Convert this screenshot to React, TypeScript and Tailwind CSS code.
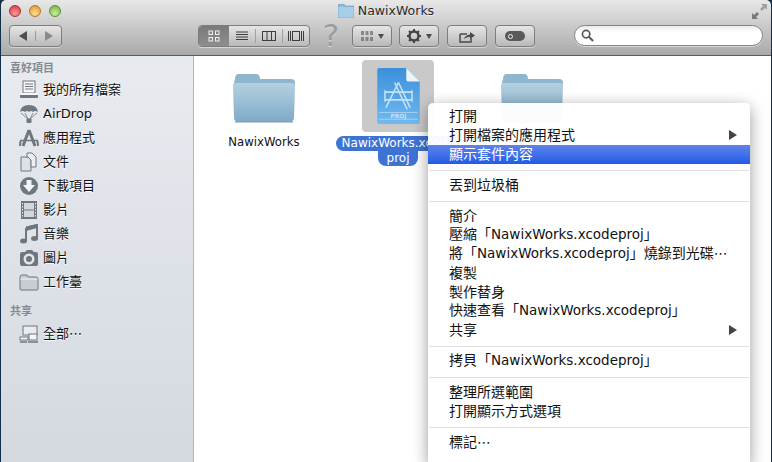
import type { ReactNode } from "react";

const FONT = "font-['DejaVu_Sans','Noto_Sans_CJK_TC',sans-serif]";

function FolderIcon({ className, gradId }: { className: string; gradId: string }) {
  return (
    <svg viewBox="0 0 64 50" className={className}>
      <defs>
        <linearGradient id={gradId} x1="0" y1="0" x2="0" y2="1">
          <stop offset="0" stopColor="#b5d0e1" />
          <stop offset="1" stopColor="#7fabc8" />
        </linearGradient>
      </defs>
      <path d="M3 6 Q3 1 7 1 L24 1 Q28 1 28 6 L59 6 Q63 6 63 10 L63 14 L1 14 Z" fill="#8fb5cf" />
      <path d="M1 13 Q1 10 4 10 L60 10 Q63 10 63 13 L62 45 Q62 48 59 48 L5 48 Q2 48 2 45 Z" fill={`url(#${gradId})`} />
      <rect x="3" y="48" width="58" height="1.5" fill="#5c7587" opacity="0.7" />
    </svg>
  );
}

function ProjectIcon() {
  return (
    <svg viewBox="0 0 46 60" className="h-[58px] w-[45px]">
      <defs>
        <linearGradient id="proj" x1="0" y1="0" x2="0" y2="1">
          <stop offset="0" stopColor="#3c8fdb" />
          <stop offset="1" stopColor="#70baf0" />
        </linearGradient>
      </defs>
      <path d="M1 3 Q1 1 3 1 L31 1 L45 15 L45 57 Q45 59 43 59 L3 59 Q1 59 1 57 Z" fill="url(#proj)" />
      <path d="M31 1 L45 15 L33 15 Q31 15 31 13 Z" fill="#eef3f7" />
      <g fill="none" stroke="#c2e2f8" strokeWidth="1.6">
        <path d="M23 16 L10 42 M23 16 L35 42 M19 16 L32 44" />
        <path d="M9 26 H37 M9 34 H37 M9 24 V36 M37 24 V36" />
        <path d="M3 47 H43 M3 54 H43" strokeWidth="0.7" />
      </g>
      <text x="23" y="53" textAnchor="middle" fontSize="6" fontWeight="700" fill="#c2e2f8" fontFamily="DejaVu Sans">
        PROJ
      </text>
    </svg>
  );
}

function SidebarGlyph({ name }: { name: string }) {
  const c = "#70767e";
  const box = "h-[20px] w-[20px]";
  switch (name) {
    case "all":
      return (
        <svg viewBox="0 0 20 20" className={box}>
          <rect x="4" y="1" width="12" height="12" fill="#f5f6f8" stroke={c} />
          <path d="M6 4H14M6 6.5H14M6 9H14" stroke={c} />
          <rect x="1" y="13" width="18" height="5" rx="1" fill={c} />
          <rect x="1" y="13" width="18" height="2" fill="#f5f6f8" />
        </svg>
      );
    case "airdrop":
      return (
        <svg viewBox="0 0 20 20" className={box}>
          <path d="M1 8 Q2 1 10 1 Q18 1 19 8 Q16 6 14 8 Q12 6 10 8 Q8 6 6 8 Q4 6 1 8Z" fill={c} />
          <path d="M2 9 L9 15 M18 9 L11 15 M6 9 L9 15 M14 9 L11 15" stroke={c} strokeWidth="0.8" />
          <rect x="7.5" y="14.5" width="5" height="4.5" rx="1" fill={c} />
        </svg>
      );
    case "apps":
      return (
        <svg viewBox="0 0 20 20" className={box}>
          <path d="M10 2 L4 18 M10 2 L16 18" stroke={c} strokeWidth="3" fill="none" />
          <path d="M1 12.5 H19" stroke={c} strokeWidth="1.5" />
          <path d="M1.5 13 L1 18 M18.5 13 L19 18" stroke={c} strokeWidth="2" />
        </svg>
      );
    case "docs":
      return (
        <svg viewBox="0 0 20 20" className={box}>
          <path d="M2 5 H9 L12 8 V19 H2 Z" fill="#dde0e5" stroke={c} />
          <path d="M8 1 H13 L17 5 V15 H12 V8 L9 5 H8 Z" fill="#eceef1" stroke={c} />
        </svg>
      );
    case "downloads":
      return (
        <svg viewBox="0 0 20 20" className={box}>
          <circle cx="10" cy="10" r="9" fill={c} />
          <path d="M7.5 4 H12.5 V9 H16 L10 16 L4 9 H7.5 Z" fill="#f3f4f6" />
        </svg>
      );
    case "movies":
      return (
        <svg viewBox="0 0 20 20" className={box}>
          <rect x="2" y="1" width="16" height="18" fill={c} />
          <rect x="5" y="3" width="10" height="6.5" fill="#d3d6db" />
          <rect x="5" y="10.5" width="10" height="6.5" fill="#d3d6db" />
          <path d="M3.5 3V17M16.5 3V17" stroke="#e6e8eb" strokeDasharray="1.5 1.5" />
        </svg>
      );
    case "music":
      return (
        <svg viewBox="0 0 20 20" className={box}>
          <path d="M7 4 L18 1 V14 M7 4 V17" stroke={c} strokeWidth="2" fill="none" />
          <path d="M7 2.5 L18 0 V4 L7 7 Z" fill={c} />
          <ellipse cx="4.5" cy="17" rx="3.5" ry="2.5" fill={c} />
          <ellipse cx="15.5" cy="14.5" rx="3.5" ry="2.5" fill={c} />
        </svg>
      );
    case "photos":
      return (
        <svg viewBox="0 0 20 20" className={box}>
          <path d="M1 6 Q1 4 3 4 L6 4 L8 2 H13 L15 4 H17 Q19 4 19 6 V16 Q19 18 17 18 H3 Q1 18 1 16 Z" fill={c} />
          <circle cx="10" cy="11" r="5.5" fill="#e4e6ea" />
          <circle cx="10" cy="11" r="3" fill={c} />
        </svg>
      );
    case "desk":
      return (
        <svg viewBox="0 0 20 20" className={box}>
          <path d="M1 5 Q1 3 3 3 H8 L9 5 H17 Q19 5 19 7 V17 Q19 18 18 18 H2 Q1 18 1 17 Z" fill="#c9cdd3" stroke={c} />
          <path d="M1.5 7 H18.5" stroke="#f2f3f5" />
        </svg>
      );
    default:
      return (
        <svg viewBox="0 0 20 20" className={box}>
          <rect x="4" y="2" width="14" height="9" fill="#e9ebee" stroke={c} />
          <rect x="1" y="13" width="8" height="3" fill="#f4f5f7" stroke={c} />
          <rect x="10" y="10" width="8" height="6" fill="#f4f5f7" stroke={c} />
          <path d="M9 18 H19" stroke={c} strokeWidth="1.5" />
          <path d="M1 18 H8" stroke={c} strokeWidth="1.5" />
        </svg>
      );
  }
}

function SidebarItem({ icon, label }: { icon: string; label: string }) {
  return (
    <div className="flex h-[24px] items-center pl-[18px]">
      <SidebarGlyph name={icon} />
      <span className="mb-px ml-[4px] text-[13px] text-[#111] [text-shadow:0_1px_0_#fff]">{label}</span>
    </div>
  );
}

function ToolButton({ className, children }: { className: string; children: ReactNode }) {
  return (
    <div
      className={`flex h-[22px] items-center justify-center rounded-[4px] border border-[#7d7d7d] bg-gradient-to-b from-[#e6e6e6] to-[#b9b9b9] shadow-[0_1px_0_rgba(255,255,255,0.45)] ${className}`}
    >
      {children}
    </div>
  );
}

function Caret() {
  return <div className="ml-[5px] h-0 w-0 border-x-[3.5px] border-t-[5px] border-x-transparent border-t-[#4c4c4c]" />;
}

function Toolbar() {
  return (
    <div className="flex h-[33px] pl-[8px] pt-[3px]">
      <ToolButton className="w-[53px]">
        <div className="flex flex-1 justify-center border-r border-[#9a9a9a]">
          <div className="h-0 w-0 border-y-[5.5px] border-r-[8px] border-y-transparent border-r-[#4f4f4f]" />
        </div>
        <div className="flex flex-1 justify-center">
          <div className="h-0 w-0 border-y-[5.5px] border-l-[8px] border-y-transparent border-l-[#8a8a8a]" />
        </div>
      </ToolButton>

      <ToolButton className="ml-[136px] w-[112px] overflow-hidden">
        <div className="flex h-full w-[30px] items-center justify-center bg-gradient-to-b from-[#7a7a7a] to-[#8e8e8e]">
          <svg viewBox="0 0 12 12" className="h-[12px] w-[12px]" fill="none" stroke="#f2f2f2">
            <rect x="1" y="1" width="3.5" height="3.5" />
            <rect x="7.5" y="1" width="3.5" height="3.5" />
            <rect x="1" y="7.5" width="3.5" height="3.5" />
            <rect x="7.5" y="7.5" width="3.5" height="3.5" />
          </svg>
        </div>
        <div className="flex h-[14px] w-[27px] items-center justify-center border-r border-[#a0a0a0]">
          <svg viewBox="0 0 12 10" className="h-[10px] w-[12px]" stroke="#3d3d3d">
            <path d="M0 1H12M0 3.5H12M0 6H12M0 8.5H12" />
          </svg>
        </div>
        <div className="flex h-[14px] w-[27px] items-center justify-center border-r border-[#a0a0a0]">
          <svg viewBox="0 0 14 10" className="h-[10px] w-[14px]" fill="none" stroke="#3d3d3d">
            <rect x="0.5" y="0.5" width="13" height="9" />
            <path d="M5 0V10M9.5 0V10" />
          </svg>
        </div>
        <div className="flex h-[14px] flex-1 items-center justify-center">
          <svg viewBox="0 0 16 10" className="h-[10px] w-[16px]" fill="none" stroke="#3d3d3d">
            <path d="M0.5 0V10M2.5 0V10M13.5 0V10M15.5 0V10" />
            <rect x="4.5" y="0.5" width="7" height="9" />
          </svg>
        </div>
      </ToolButton>

      <div className="flex h-[22px] w-[42px] items-center justify-center pb-[2px] text-[31px] leading-none text-[#9c9c9c] [text-shadow:0_1px_0_#ddd]">
        ?
      </div>

      <ToolButton className="w-[40px]">
        <svg viewBox="0 0 12 10" className="h-[10px] w-[12px]" fill="none" stroke="#3d3d3d">
          <path d="M0 1H3M4.5 1H7.5M9 1H12M0 3H3M4.5 3H7.5M9 3H12M0 7H3M4.5 7H7.5M9 7H12M0 9H3M4.5 9H7.5M9 9H12" />
        </svg>
        <Caret />
      </ToolButton>

      <ToolButton className="ml-[7px] w-[40px]">
        <svg viewBox="0 0 14 14" className="h-[14px] w-[14px]">
          <circle cx="7" cy="7" r="4.5" fill="none" stroke="#444" strokeWidth="2.5" />
          <path d="M7 0V3M7 11V14M0 7H3M11 7H14M2 2L4 4M10 10L12 12M12 2L10 4M4 10L2 12" stroke="#444" strokeWidth="2" />
        </svg>
        <Caret />
      </ToolButton>

      <ToolButton className="ml-[8px] w-[40px]">
        <svg viewBox="0 0 16 13" className="h-[13px] w-[16px]">
          <path d="M1 4H8M1 4V12H12V8" fill="none" stroke="#4a4a4a" strokeWidth="1.5" />
          <path d="M5 9 Q6 5 11 4.5 V2 L16 5.5 L11 9 V6.8 Q7 7 5 9Z" fill="#4a4a4a" />
        </svg>
      </ToolButton>

      <ToolButton className="ml-[8px] w-[40px]">
        <div className="flex h-[10px] w-[20px] items-center rounded-full bg-[#5a5a5a] pl-[3px]">
          <div className="h-[5px] w-[5px] rounded-full border border-[#eee]" />
        </div>
      </ToolButton>

      <div className="ml-[39px] flex h-[21px] w-[189px] items-center rounded-full border border-[#858585] bg-gradient-to-b from-[#eaeaea] to-white to-30% pl-[6px] shadow-[0_1px_0_rgba(255,255,255,0.5)]">
        <svg viewBox="0 0 14 14" className="h-[13px] w-[13px]" fill="none" stroke="#555">
          <circle cx="5.5" cy="5.5" r="4" strokeWidth="1.8" />
          <path d="M8.5 8.5L13 13" strokeWidth="2.2" />
        </svg>
      </div>
    </div>
  );
}

function MenuRow({ children, selected, arrow }: { children: ReactNode; selected?: boolean; arrow?: boolean }) {
  return (
    <div
      className={`flex h-[19px] items-center justify-between pb-[2px] pl-[21px] pr-[13px] text-[14px] leading-none ${
        selected ? "bg-gradient-to-b from-[#5f82ea] to-[#1f5ce6] text-white" : "text-[#111]"
      }`}
    >
      <span>{children}</span>
      {arrow && <div className="h-0 w-0 border-y-[5px] border-l-[8px] border-y-transparent border-l-[#444]" />}
    </div>
  );
}

function MenuSep() {
  return <div className="mx-px mb-[5px] mt-[6px] h-px bg-[#e0e0e0]" />;
}

function ProjName() {
  return <span className="text-[13.5px]">NawixWorks.xcodeproj</span>;
}

function ContextMenu() {
  return (
    <div className="absolute left-[428px] top-[103px] h-[360px] w-[322px] overflow-hidden rounded-t-[5px] bg-white/[0.96] pt-[4px] shadow-[0_4px_16px_rgba(0,0,0,0.4)]">
      <MenuRow>打開</MenuRow>
      <MenuRow arrow>打開檔案的應用程式</MenuRow>
      <MenuRow selected>顯示套件內容</MenuRow>
      <MenuSep />
      <MenuRow>丟到垃圾桶</MenuRow>
      <MenuSep />
      <MenuRow>簡介</MenuRow>
      <MenuRow>壓縮「<ProjName />」</MenuRow>
      <MenuRow>將「<ProjName />」燒錄到光碟⋯</MenuRow>
      <MenuRow>複製</MenuRow>
      <MenuRow>製作替身</MenuRow>
      <MenuRow>快速查看「<ProjName />」</MenuRow>
      <MenuRow arrow>共享</MenuRow>
      <MenuSep />
      <MenuRow>拷貝「<ProjName />」</MenuRow>
      <MenuSep />
      <MenuRow>整理所選範圍</MenuRow>
      <MenuRow>打開顯示方式選項</MenuRow>
      <MenuSep />
      <MenuRow>標記⋯</MenuRow>
    </div>
  );
}

export default function App() {
  return (
    <div className={`relative h-[462px] w-[772px] overflow-hidden bg-[#12304a] px-px ${FONT}`}>
      <div className="flex h-full flex-col overflow-hidden rounded-t-[5px]">
        {/* Title bar and toolbar */}
        <div className="h-[55px] shrink-0 bg-gradient-to-b from-[#e8e8e8] to-[#a9a9a9]">
          <div className="relative flex h-[22px] items-center justify-center">
            <div className="absolute left-[8px] top-[5px] flex gap-[8px]">
              <div className="h-[12px] w-[12px] rounded-full border border-[#a5323a] bg-[radial-gradient(circle_at_50%_75%,#ff9a9a,#d8323c)]" />
              <div className="h-[12px] w-[12px] rounded-full border border-[#ad7a2a] bg-[radial-gradient(circle_at_50%_75%,#ffdf90,#dc8f2c)]" />
              <div className="h-[12px] w-[12px] rounded-full border border-[#5c8f3a] bg-[radial-gradient(circle_at_50%_75%,#c6f09a,#6cae45)]" />
            </div>
            <svg viewBox="0 0 16 14" className="mr-[4px] h-[14px] w-[16px]">
              <path d="M0 2 Q0 0 2 0 H6 L7 2 H16 V14 H0 Z" fill="#8fbbd9" stroke="#5e8aa8" strokeWidth="0.5" />
              <rect x="0.5" y="3" width="15" height="10.5" fill="#a8cfe8" />
            </svg>
            <span className="text-[12.5px] leading-none text-[#2a2a2a] [text-shadow:0_1px_0_rgba(255,255,255,0.6)]">
              NawixWorks
            </span>
            <svg viewBox="0 0 15 15" className="absolute right-[4px] top-[4px] h-[15px] w-[15px]">
              <path d="M15 0 V6 L13 4 L10 7 L8 5 L11 2 L9 0 Z" fill="#a0a0a0" />
              <path d="M0 15 V9 L2 11 L5 8 L7 10 L4 13 L6 15 Z" fill="#777" />
            </svg>
          </div>
          <Toolbar />
        </div>

        <div className="flex min-h-0 flex-1 border-t border-[#5b5b5b]">
          {/* Sidebar */}
          <div className="w-[193px] shrink-0 border-r border-[#b2b5ba] bg-gradient-to-b from-[#e8ebf0] to-[#d4d9e0]">
            <div className="pl-[9px] pt-[6px] text-[11px] font-bold leading-[14px] text-[#848a92]">喜好項目</div>
            <div className="pt-[2px]">
              <SidebarItem icon="all" label="我的所有檔案" />
              <SidebarItem icon="airdrop" label="AirDrop" />
              <SidebarItem icon="apps" label="應用程式" />
              <SidebarItem icon="docs" label="文件" />
              <SidebarItem icon="downloads" label="下載項目" />
              <SidebarItem icon="movies" label="影片" />
              <SidebarItem icon="music" label="音樂" />
              <SidebarItem icon="photos" label="圖片" />
              <SidebarItem icon="desk" label="工作臺" />
            </div>
            <div className="pl-[9px] pt-[11px] text-[11px] font-bold leading-[14px] text-[#848a92]">共享</div>
            <div className="pt-[3px]">
              <SidebarItem icon="network" label="全部⋯" />
            </div>
          </div>

          {/* File icons */}
          <div className="flex flex-1 items-start bg-white pl-[3px] pt-[4px]">
            <div className="flex w-[134px] flex-col items-center">
              <div className="flex h-[72px] items-center pt-[3px]">
                <FolderIcon className="h-[50px] w-[64px]" gradId="f1" />
              </div>
              <div className="mt-[3px] text-[11.7px] leading-[14px] text-[#111]">NawixWorks</div>
            </div>
            <div className="flex w-[134px] flex-col items-center">
              <div className="flex h-[72px] w-[72px] items-center justify-center rounded-[4px] bg-[#c9c9c9]">
                <ProjectIcon />
              </div>
              <div className="mt-[3px] flex flex-col items-center pt-px text-[12px] leading-[15px] text-white">
                <div className="w-[124px] whitespace-nowrap rounded-full bg-[#3d74d4] text-center">NawixWorks.xcode</div>
                <div className="rounded-b-[8px] bg-[#3d74d4] px-[9px]">proj</div>
              </div>
            </div>
            <div className="flex w-[134px] flex-col items-center">
              <div className="flex h-[72px] items-center pt-[3px]">
                <FolderIcon className="h-[50px] w-[64px]" gradId="f2" />
              </div>
            </div>
          </div>
        </div>
      </div>
      <ContextMenu />
    </div>
  );
}
